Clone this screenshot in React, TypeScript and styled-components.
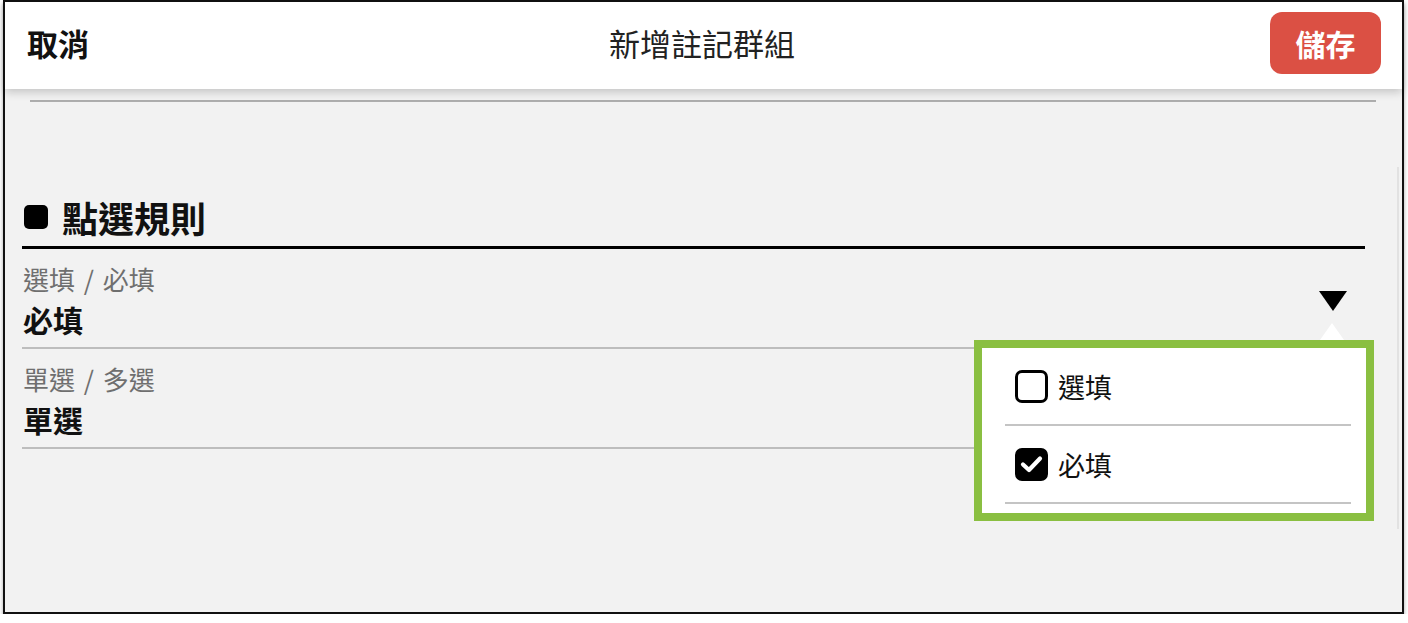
import React from "react";
import styled, { createGlobalStyle } from "styled-components";

const GlobalStyle = createGlobalStyle`
  html, body {
    margin: 0;
    padding: 0;
    background: #ffffff;
    font-family: "Noto Sans CJK TC", "Noto Sans", sans-serif;
  }
  * { box-sizing: border-box; }
`;

const Frame = styled.div`
  position: relative;
  margin-left: 3px;
  width: 1401px;
  height: 614px;
  border: 2px solid #111;
  background: #f2f2f2;
  box-shadow: 0 3px 4px rgba(0, 0, 0, 0.35);
  display: flex;
  flex-direction: column;
`;

const Header = styled.header`
  position: relative;
  z-index: 2;
  height: 87px;
  flex: none;
  background: #ffffff;
  box-shadow: 0 3px 9px rgba(0, 0, 0, 0.2);
  display: grid;
  grid-template-columns: 1fr auto 1fr;
  align-items: center;
  padding: 0 21px 7px 22px;
`;

const Cancel = styled.button`
  justify-self: start;
  border: none;
  background: none;
  padding: 0;
  font-family: inherit;
  font-size: 31px;
  font-weight: 700;
  color: #111;
  line-height: 1;
`;

const Title = styled.h1`
  margin: 0 0 0 -4px;
  font-size: 31px;
  font-weight: 400;
  color: #222;
  line-height: 1;
`;

const SaveButton = styled.button`
  justify-self: end;
  width: 111px;
  height: 62px;
  border: none;
  border-radius: 12px;
  background: #db5044;
  color: #fff;
  font-family: inherit;
  font-size: 30px;
  font-weight: 700;
  margin-top: 2px;
  padding: 0;
`;

const Body = styled.main`
  flex: 1;
  padding: 11px 26px 0 17px;
`;

const TopRule = styled.div`
  height: 2px;
  background: #adadad;
  margin-left: 8px;
`;

const Section = styled.section`
  position: relative;
  margin-top: 94px;
  margin-right: 11px;
`;

const SectionTitle = styled.h2`
  margin: 0;
  height: 53px;
  display: flex;
  align-items: center;
  gap: 14px;
  padding: 0 0 8px 2px;
  border-bottom: 3px solid #000;
  font-size: 36px;
  font-weight: 700;
  color: #111;
  line-height: 42px;
`;

const Bullet = styled.span`
  width: 24px;
  height: 24px;
  border-radius: 5px;
  background: #000;
  flex: none;
`;

const Row = styled.div`
  display: flex;
  align-items: center;
  justify-content: space-between;
  padding: 11px 18px 6px 1px;
  border-bottom: 2px solid #bdbdbd;
`;

const Field = styled.div`
  display: flex;
  flex-direction: column;
`;

const Label = styled.span`
  font-size: 26px;
  line-height: 38px;
  color: #6f6f6f;
  word-spacing: 3px;
`;

const Value = styled.span`
  font-size: 30px;
  line-height: 43px;
  font-weight: 700;
  color: #111;
`;

const Caret = styled.svg`
  width: 28px;
  height: 20px;
  flex: none;
`;

const Popup = styled.div`
  position: absolute;
  top: 144px;
  right: -9px;
  width: 400px;
  height: 181px;
  border: 8px solid #8abf41;
  background: #fff;
  padding: 0 15px 8px 23px;
  z-index: 3;
`;

const Pointer = styled.span`
  position: absolute;
  top: -25px;
  left: 338px;
  width: 0;
  height: 0;
  border-left: 12px solid transparent;
  border-right: 12px solid transparent;
  border-bottom: 17px solid #fff;
`;

const Option = styled.div`
  height: 78px;
  display: flex;
  align-items: center;
  gap: 10px;
  padding-left: 10px;
  border-bottom: 2px solid #c4c4c4;
  font-size: 27px;
  color: #111;
`;

const Box = styled.span<{ $checked?: boolean }>`
  width: 33px;
  height: 33px;
  border-radius: 7px;
  border: 3px solid #000;
  background: ${(p) => (p.$checked ? "#000" : "#fff")};
  display: flex;
  align-items: center;
  justify-content: center;
  flex: none;
`;

const ScrollTrack = styled.span`
  position: absolute;
  right: 3px;
  top: 165px;
  width: 2px;
  height: 362px;
  background: #e2e2e2;
`;

export default function App() {
  return (
    <>
      <GlobalStyle />
      <Frame>
        <Header>
          <Cancel>取消</Cancel>
          <Title>新增註記群組</Title>
          <SaveButton>儲存</SaveButton>
        </Header>
        <Body>
          <TopRule />
          <Section>
            <SectionTitle>
              <Bullet />
              點選規則
            </SectionTitle>
            <Row>
              <Field>
                <Label>選填 / 必填</Label>
                <Value>必填</Value>
              </Field>
              <Caret viewBox="0 0 28 20">
                <polygon points="0,0 28,0 14,20" fill="#000" />
              </Caret>
            </Row>
            <Row>
              <Field>
                <Label>單選 / 多選</Label>
                <Value>單選</Value>
              </Field>
            </Row>
            <Popup>
              <Pointer />
              <Option>
                <Box />
                選填
              </Option>
              <Option>
                <Box $checked>
                  <svg width="23" height="18" viewBox="0 0 23 18">
                    <polyline
                      points="3,9.5 9,15 20,3.5"
                      fill="none"
                      stroke="#fff"
                      strokeWidth="4.2"
                      strokeLinecap="round"
                      strokeLinejoin="round"
                    />
                  </svg>
                </Box>
                必填
              </Option>
            </Popup>
          </Section>
        </Body>
        <ScrollTrack />
      </Frame>
    </>
  );
}
